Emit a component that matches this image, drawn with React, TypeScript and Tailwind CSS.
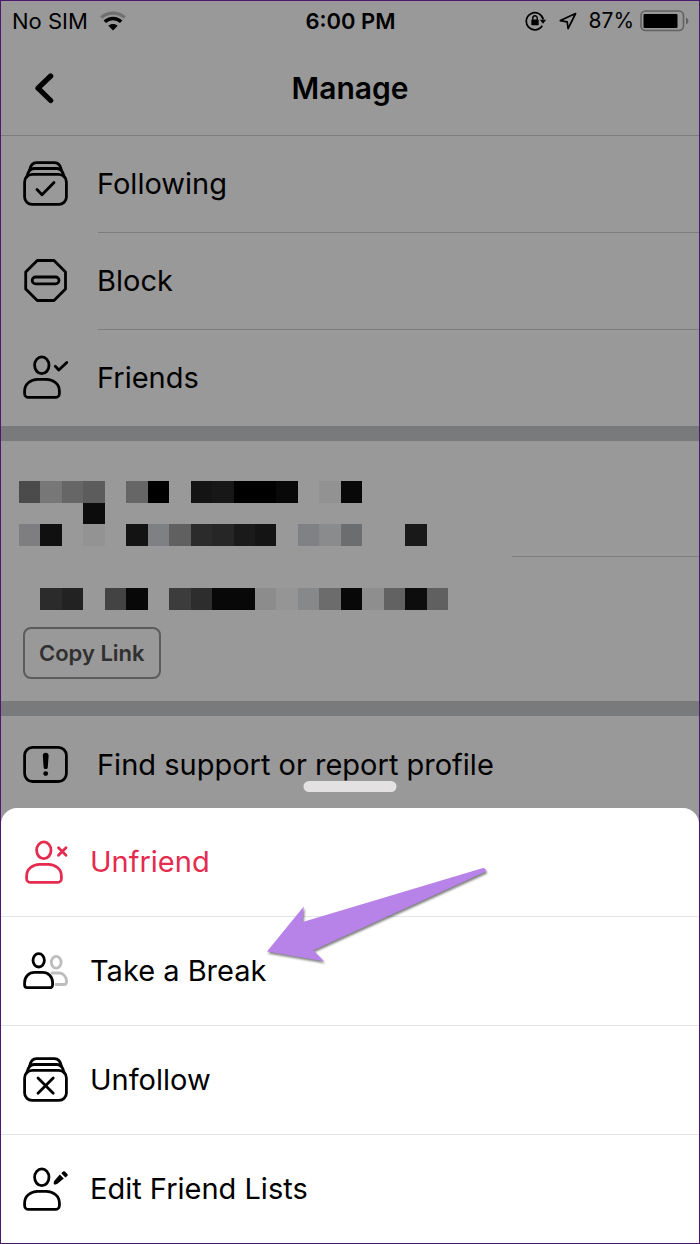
import type { ReactNode } from "react";

function Glyph({ children }: { children: ReactNode }) {
  return (
    <svg
      viewBox="0 0 46 46"
      fill="none"
      stroke="currentColor"
      strokeWidth="2.8"
      strokeLinecap="round"
      strokeLinejoin="round"
      aria-hidden="true"
      className="size-[46px] shrink-0"
    >
      {children}
    </svg>
  );
}

function Person() {
  return (
    <>
      <ellipse cx="18.8" cy="10.3" rx="7.2" ry="8.4" />
      <path d="M1.6 36C1.6 29 8 24.3 14.5 24.3h9C30 24.3 36.4 29 36.4 36v2.4a4 4 0 0 1-4 4H5.6a4 4 0 0 1-4-4z" />
    </>
  );
}

function Stack() {
  return (
    <>
      <rect x="1.6" y="13.4" width="41.8" height="30" rx="7.5" />
      <path d="M3.8 16C5 10 7.5 7.500 11 7.500h23c3.500 0 6 2.500 7.200 8.500" />
      <path d="M6.500 9.500C7.500 4 10 1.700 13.500 1.700h18C35 1.700 37.500 4 38.500 9.500" />
    </>
  );
}

const followingIcon = (
  <Glyph>
    <Stack />
    <path d="M14 28.5l5 5.200L31 21.500" />
  </Glyph>
);

const blockIcon = (
  <Glyph>
    <path d="M14.300 2.500h16.700L42.500 14v17L31 42.500H14.300L2.700 31V14z" />
    <rect x="9.200" y="19" width="26.800" height="6.800" rx="3.400" />
  </Glyph>
);

const friendsIcon = (
  <Glyph>
    <Person />
    <path d="M32.300 11.300l3.500 3.700L43.800 7.500" />
  </Glyph>
);

const reportIcon = (
  <Glyph>
    <rect x="1.600" y="5.300" width="41.800" height="34.200" rx="8" />
    <path
      d="M22.700 10.700c1.900 0 3 1.300 2.900 3.100l-.8 11.400c-.1 1.300-1 1.900-2.100 1.900s-2-.6-2.100-1.900l-.8-11.400c-.1-1.800 1-3.100 2.900-3.100z"
      fill="currentColor"
      stroke="none"
    />
    <circle cx="22.700" cy="31.600" r="2.400" fill="currentColor" stroke="none" />
  </Glyph>
);

const unfriendIcon = (
  <Glyph>
    <g transform="translate(2 1)">
      <Person />
    </g>
    <path d="M35.500 8.800l7.500 7.400M43 8.800l-7.500 7.400" />
  </Glyph>
);

const breakIcon = (
  <Glyph>
    <g stroke="#bdbdbd">
      <ellipse cx="33.200" cy="14.200" rx="4.900" ry="5.900" />
      <path d="M29 25h7c4.500 0 7.500 4 7.500 8.500v.5a2.500 2.500 0 0 1-2.500 2.500h-8" />
    </g>
    <path
      d="M1.600 34.500c0-6 4.500-10.200 10-10.200h8c5.500 0 10 4.200 10 10.200V37a2.700 2.700 0 0 1-2.700 2.700H4.300A2.700 2.700 0 0 1 1.600 37z"
      className="fill-white"
    />
    <ellipse cx="15.700" cy="12.300" rx="5.700" ry="6.700" />
  </Glyph>
);

const unfollowIcon = (
  <Glyph>
    <Stack />
    <path d="M15 21l15.200 15.200M30.200 21L15 36.200" />
  </Glyph>
);

const editIcon = (
  <Glyph>
    <g transform="translate(0 1)">
      <Person />
    </g>
    <g fill="currentColor" stroke="none">
      <path d="M36.800 8.500l4 4-6.300 5.300c-1 .8-3.300.8-3.600.5s-.3-2.600.5-3.600z" />
      <path d="M38.300 7.200l1.800-1.600c.7-.6 1.500-.5 2.100.1l2.100 2.200c.6.600.6 1.400 0 2l-1.900 1.500z" />
    </g>
  </Glyph>
);

const PAGE_ROWS = [
  { label: "Following", icon: followingIcon },
  { label: "Block", icon: blockIcon },
  { label: "Friends", icon: friendsIcon },
];

const SHEET_ROWS = [
  { label: "Unfriend", icon: unfriendIcon, tone: "text-[#e42c4f]" },
  { label: "Take a Break", icon: breakIcon, tone: "text-black" },
  { label: "Unfollow", icon: unfollowIcon, tone: "text-black" },
  { label: "Edit Friend Lists", icon: editIcon, tone: "text-black" },
];

// [column, row, colour] of each redaction block
const BLOCKS: [number, number, string][] = [
  [0, 0, "#4b4b4b"], [1, 0, "#777777"], [2, 0, "#666666"], [3, 0, "#5c5c5c"],
  [5, 0, "#666666"], [6, 0, "#000000"], [8, 0, "#141414"], [9, 0, "#171717"],
  [10, 0, "#000000"], [11, 0, "#000000"], [12, 0, "#080808"], [14, 0, "#929292"],
  [15, 0, "#080808"],
  [3, 1, "#0c0c0c"],
  [0, 2, "#7e7e80"], [1, 2, "#101010"], [3, 2, "#939393"], [5, 2, "#131313"],
  [6, 2, "#7f8083"], [7, 2, "#606060"], [8, 2, "#2b2b2b"], [9, 2, "#262626"],
  [10, 2, "#1a1a1a"], [11, 2, "#141414"], [13, 2, "#808184"], [14, 2, "#8a8b8d"],
  [15, 2, "#6c6d6f"], [18, 2, "#191919"],
  [1, 5, "#2b2b2b"], [2, 5, "#222222"], [4, 5, "#434343"], [5, 5, "#080808"],
  [7, 5, "#3c3c3c"], [8, 5, "#2d2d2d"], [9, 5, "#080808"], [10, 5, "#080808"],
  [11, 5, "#8c8c8c"], [12, 5, "#959595"], [13, 5, "#87888a"], [14, 5, "#6c6c6c"],
  [15, 5, "#080808"], [16, 5, "#8e8e8e"], [17, 5, "#626262"], [18, 5, "#0d0d0d"],
  [19, 5, "#606060"],
];

function StatusBar() {
  return (
    <div className="grid h-[39px] grid-cols-[1fr_auto_1fr] items-center pr-2.5 pl-[11px] text-[22px]">
      <div className="flex items-center gap-3">
        <span>No SIM</span>
        <svg viewBox="0 0 26 20" fill="none" className="h-5 w-[26px]" aria-label="Wi-Fi">
          <path d="M1.200 6.500C8 .6 18 .6 24.800 6.500" stroke="#707070" strokeWidth="3.200" />
          <path d="M4.800 10.800c4.700-4.400 11.700-4.400 16.400 0" stroke="currentColor" strokeWidth="3.600" />
          <path d="M8.300 14.800c2.600-2.400 6.800-2.400 9.400 0L13 19.400z" fill="currentColor" />
        </svg>
      </div>
      <span className="font-semibold">6:00 PM</span>
      <div className="flex items-center justify-end">
        <svg viewBox="0 0 22 20" fill="none" stroke="currentColor" className="mr-3 h-5 w-[22px]" aria-label="Rotation lock">
          <path d="M17.200 14.800A8.600 8.600 0 1 1 18.300 8.500" strokeWidth="1.700" />
          <path d="M14.800 8.800h6.400l-3.200 4z" fill="currentColor" stroke="none" />
          <rect x="6.300" y="8.600" width="7.400" height="5.600" rx=".8" fill="currentColor" stroke="none" />
          <path d="M7.800 9V7a2.200 2.200 0 0 1 4.400 0V9" strokeWidth="1.400" />
        </svg>
        <svg viewBox="0 0 18 18" fill="none" stroke="currentColor" strokeWidth="1.700" strokeLinejoin="round" className="mr-3 size-[18px]" aria-label="Location">
          <path d="M16.600 1.500L1.300 8.600l6.900 1.300.9 6.700z" />
        </svg>
        <span className="mr-1.5 text-[21px]">87%</span>
        <svg viewBox="0 0 49 22" className="h-[22px] w-[49px]" aria-label="Battery">
          <rect x="1" y="1" width="42.500" height="19.500" rx="4.500" fill="none" stroke="#626262" strokeWidth="1.600" />
          <rect x="3.500" y="4" width="34" height="14" rx="1" fill="currentColor" />
          <path d="M46 7.500c3.200 1.400 3.200 5.600 0 7z" fill="#626262" />
        </svg>
      </div>
    </div>
  );
}

function Header() {
  return (
    <header className="grid h-24 grid-cols-[1fr_auto_1fr] items-center border-b border-[#7d7d7d]">
      <button type="button" aria-label="Back" className="ml-[33px] w-fit">
        <svg viewBox="0 0 20 32" fill="none" stroke="currentColor" strokeWidth="5.200" strokeLinecap="round" strokeLinejoin="round" className="h-8 w-5">
          <path d="M16.700 4L4 16.200l12.700 12.300" />
        </svg>
      </button>
      <h1 className="text-[30px] leading-9 font-semibold">Manage</h1>
    </header>
  );
}

function Redacted() {
  return (
    <svg viewBox="0 0 20 6" shapeRendering="crispEdges" className="ml-[18px] h-[129px] w-[429px] shrink-0" aria-hidden="true">
      {BLOCKS.map(([x, y, fill]) => (
        <rect key={`${x}-${y}`} x={x} y={y} width="1" height="1" fill={fill} />
      ))}
    </svg>
  );
}

function Sheet() {
  return (
    <div role="dialog" aria-label="Friend options" className="relative -mt-1.5 rounded-t-[16px] bg-white">
      <div className="absolute -top-[27px] left-1/2 h-[11px] w-[93px] -translate-x-1/2 rounded-full bg-[#e3e1e2]" />
      <ul className="divide-y divide-[#e3e4e6]">
        {SHEET_ROWS.map((row) => (
          <li key={row.label}>
            <button type="button" className={`flex h-[108px] w-full items-center gap-[21px] pl-[22px] text-left ${row.tone}`}>
              {row.icon}
              <span>{row.label}</span>
            </button>
          </li>
        ))}
      </ul>
      <svg
        viewBox="264 864 228 104"
        aria-hidden="true"
        className="pointer-events-none absolute top-[56px] left-[263px] h-[104px] w-[228px] drop-shadow-[1px_2px_1px_rgba(0,0,0,0.5)]"
      >
        <path
          d="M267 951.500L303.700 906.500 302.700 922 483 868q3 0 3 3.500L313.300 950.300 324 961.300z"
          fill="#b883e8"
        />
      </svg>
    </div>
  );
}

export default function App() {
  return (
    <div className="min-h-screen border border-[#4b1a6e] bg-[#999999] font-['Inter',sans-serif] text-[29px] leading-9 text-black">
      <StatusBar />
      <Header />

      <ul>
        {PAGE_ROWS.map((row, i) => (
          <li key={row.label}>
            {i > 0 && <div className="ml-[97px] h-px bg-[#7d7d7d]" />}
            <button type="button" className="flex h-24 w-full items-center gap-7 pl-[22px] text-left">
              {row.icon}
              <span>{row.label}</span>
            </button>
          </li>
        ))}
      </ul>

      <section className="border-y-[15px] border-[#797a7b] pt-10 pb-[22px]">
        <div className="flex">
          <Redacted />
          <div className="mt-[75px] ml-16 h-px flex-1 bg-[#7d7d7d]" />
        </div>
        <button
          type="button"
          className="mt-[17px] ml-[22px] h-[52px] rounded-lg border-2 border-[#5c5c5c] px-3.5 text-[22px] font-semibold text-[#303030]"
        >
          Copy Link
        </button>
      </section>

      <button type="button" className="flex h-[98px] w-full items-center gap-7 pl-[22px] text-left">
        {reportIcon}
        <span>Find support or report profile</span>
      </button>

      <Sheet />
    </div>
  );
}
